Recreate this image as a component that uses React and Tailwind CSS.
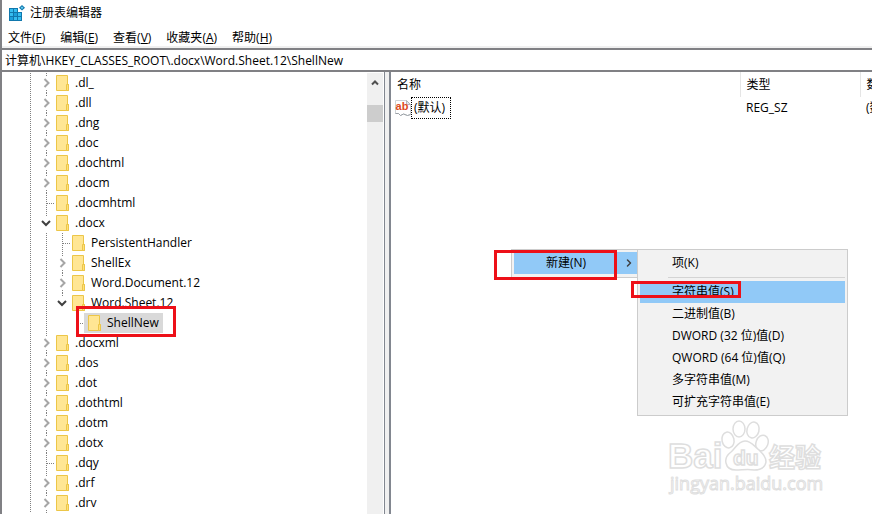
import { ChevronRight } from 'lucide-react'

const MENUS = [
  ['文件', 'F'],
  ['编辑', 'E'],
  ['查看', 'V'],
  ['收藏夹', 'A'],
  ['帮助', 'H'],
]

// state: closed | open | leaf
const KEYS = [
  { name: '.dl_', level: 0, state: 'closed' },
  { name: '.dll', level: 0, state: 'closed' },
  { name: '.dng', level: 0, state: 'closed' },
  { name: '.doc', level: 0, state: 'closed' },
  { name: '.dochtml', level: 0, state: 'closed' },
  { name: '.docm', level: 0, state: 'closed' },
  { name: '.docmhtml', level: 0, state: 'leaf' },
  { name: '.docx', level: 0, state: 'open' },
  { name: 'PersistentHandler', level: 1, state: 'leaf' },
  { name: 'ShellEx', level: 1, state: 'closed' },
  { name: 'Word.Document.12', level: 1, state: 'closed' },
  { name: 'Word.Sheet.12', level: 1, state: 'open' },
  { name: 'ShellNew', level: 2, state: 'leaf', last: true, selected: true },
  { name: '.docxml', level: 0, state: 'closed' },
  { name: '.dos', level: 0, state: 'closed' },
  { name: '.dot', level: 0, state: 'closed' },
  { name: '.dothtml', level: 0, state: 'closed' },
  { name: '.dotm', level: 0, state: 'closed' },
  { name: '.dotx', level: 0, state: 'closed' },
  { name: '.dqy', level: 0, state: 'leaf' },
  { name: '.drf', level: 0, state: 'closed' },
  { name: '.drv', level: 0, state: 'closed' },
]

const VALUES = [
  ['二进制值', 'B'],
  ['DWORD (32 位)值', 'D'],
  ['QWORD (64 位)值', 'Q'],
  ['多字符串值', 'M'],
  ['可扩充字符串值', 'E'],
]

const DOTS_V = 'bg-[repeating-linear-gradient(to_bottom,#808080_0_1px,transparent_1px_2px)]'
const DOTS_H = 'bg-[repeating-linear-gradient(to_right,#808080_0_1px,transparent_1px_2px)]'

const RegIcon = () => (
  <svg width="16" height="16" viewBox="0 0 16 16" aria-hidden="true">
    <path d="M0 3h9v4h4v9H0z" fill="#1178ad" />
    <path d="M1 4h3v3H1zM5 4h3v3H5zM1 8h3v3H1zM9 8h3v3H9zM5 12h3v3H5zM9 12h3v3H9z" fill="#35bdf0" />
    <path d="M5 8h3v3H5zM1 12h3v3H1z" fill="#1c9fdc" />
    <path d="M13 0l3 2.800-3 2.800-3-2.800z" fill="#1178ad" />
    <path d="M13 1.500l1.400 1.300L13 4.100l-1.400-1.300z" fill="#6fd3f7" />
  </svg>
)

const Folder = () => (
  <svg className="shrink-0" width="13" height="16" viewBox="0 0 13 16" aria-hidden="true">
    <path d="M.5.5h11v9h1v6H.5z" fill="#ffe694" stroke="#ecc648" />
    <path d="M10.500 15V9.500h2v6h-2z" fill="#ffe07a" stroke="#ecc648" />
  </svg>
)

const StringIcon = () => (
  <svg width="16" height="16" viewBox="0 0 16 16" aria-hidden="true">
    <path d="M.5.5h11l4 4v10l-3 1-4-1.500-3 1.500-2-2h-3z" fill="#fff" stroke="#cfd3d6" />
    <path d="M11.500.5v4h4z" fill="#e4e7ea" stroke="#b4b9be" />
    <path d="M.5 13.500h3l2 2 3-1.500 4 1.500 3-1" fill="none" stroke="#9aa0a6" />
    <text x="7" y="10" textAnchor="middle" fontFamily="Liberation Sans, sans-serif" fontSize="11" fontWeight="700" fill="#dd4a22">ab</text>
  </svg>
)

function Guide() {
  return (
    <span className="flex h-5 w-4 shrink-0 justify-center pl-px">
      <span className={`h-5 w-px ${DOTS_V}`} />
    </span>
  )
}

function Expander({ item }) {
  if (item.state === 'leaf') {
    return (
      <span className="flex h-5 w-4 shrink-0 items-center pl-2">
        {!item.last && <span className={`h-5 w-px ${DOTS_V}`} />}
        <span className={`h-px w-[7px] ${DOTS_H}`} />
      </span>
    )
  }
  const open = item.state === 'open'
  return (
    <button type="button" aria-label={item.name} className="flex h-5 w-4 shrink-0 flex-col items-center justify-between">
      <span className={`h-[3px] w-px ${DOTS_V}`} />
      {open ? (
        <svg width="10" height="7" viewBox="0 0 10 7">
          <path d="M1 1l4 4 4-4" fill="none" stroke="#404040" strokeWidth="2" />
        </svg>
      ) : (
        <svg width="7" height="10" viewBox="0 0 7 10">
          <path d="M1.500 1l4 4-4 4" fill="none" stroke="#a6a6a6" strokeWidth="2" />
        </svg>
      )}
      <span className={`h-[3px] w-px ${open ? '' : DOTS_V}`} />
    </button>
  )
}

function TreeRow({ item }) {
  return (
    <li role="treeitem" aria-selected={!!item.selected} className="relative flex h-5 items-center pl-5">
      <Guide />
      {item.level > 0 && <Guide />}
      {item.level > 1 && <span className="w-4 shrink-0" />}
      <Expander item={item} />
      <span className={`flex h-5 items-center gap-1.5 ${item.selected ? '-ml-0.5 bg-[#d9d9d9] pr-1 pl-1' : 'pl-0.5'}`}>
        <Folder />
        <span className="whitespace-nowrap">{item.name}</span>
      </span>
      {item.selected && <span className="absolute -top-[7px] left-[74px] h-[31px] w-[100px] border-3 border-[#ed1018]" />}
    </li>
  )
}

function MenuItem({ label, hot, active }) {
  return (
    <button type="button" role="menuitem" className={`flex h-[22px] w-full items-center pl-8 text-left ${active ? 'bg-[#91c9f7]' : ''}`}>
      {label}({hot})
    </button>
  )
}

function ContextMenu() {
  return (
    <div className="absolute top-[177px] left-[120px] flex items-start">
      <div role="menu" className="h-[29px] w-[126px] border border-r-0 border-[#ccc] bg-[#f2f2f2] py-0.5 pl-0.5">
        <button type="button" role="menuitem" className="flex h-[22px] w-full items-center justify-between bg-[#91c9f7] pr-0.5 pl-8">
          新建(N)
          <ChevronRight size={12} color="#404040" strokeWidth={3} />
        </button>
      </div>
      <div role="menu" className="w-[211px] border border-[#ccc] bg-[#f2f2f2] p-0.5">
        <MenuItem label="项" hot="K" />
        <div className="my-[3px] ml-7 h-px bg-[#d4d4d4]" />
        <MenuItem label="字符串值" hot="S" active />
        {VALUES.map(([label, hot]) => (
          <MenuItem key={hot} label={label} hot={hot} />
        ))}
      </div>
      <span className="absolute top-px -left-[17px] h-[30px] w-[123px] border-3 border-[#ed1018]" />
      <span className="absolute top-8 left-[120px] h-[17px] w-[110px] border-3 border-[#ed1018]" />
    </div>
  )
}

function Watermark() {
  return (
    <svg className="absolute top-[346px] left-[275px]" width="164" height="84" viewBox="0 0 164 84" fill="#fff" stroke="#dedede" strokeWidth="1.500">
      <text x="2" y="50" fontFamily="Liberation Sans, sans-serif" fontSize="35" fontWeight="700">Bai</text>
      <ellipse cx="62" cy="22" rx="6" ry="8" transform="rotate(-12 62 22)" />
      <ellipse cx="73" cy="11" rx="6" ry="8" />
      <ellipse cx="87" cy="12" rx="6" ry="8" transform="rotate(14 87 12)" />
      <ellipse cx="96" cy="25" rx="6" ry="8" transform="rotate(20 96 25)" />
      <path d="M79 23c-7 0-9 7-14 11-4 3-6 7-5 11 1 5 5 7 10 7 6 0 12-1 18 0 6 0 11-2 12-8 0-5-3-8-7-12-5-4-8-9-14-9z" />
      <text x="67" y="47" fontFamily="Liberation Sans, sans-serif" fontSize="21" fontWeight="700">du</text>
      <text x="103" y="49" fontFamily="Noto Sans CJK SC, sans-serif" fontSize="26" fontWeight="700">经验</text>
      <text x="4" y="72" fontFamily="Open Sans, sans-serif" fontSize="18" strokeWidth="1">jingyan.baidu.com</text>
    </svg>
  )
}

export default function App() {
  return (
    <div className="flex h-screen flex-col overflow-hidden border-l-2 border-[#808084] bg-white font-['Open_Sans','Noto_Sans_CJK_SC',sans-serif] text-[12px] leading-5 text-black">
      <header className="flex h-[26px] shrink-0 items-center gap-[5px] pl-[7px]">
        <RegIcon />
        <h1>注册表编辑器</h1>
      </header>
      <nav className="flex h-[22px] shrink-0 items-center gap-[15px] border-b-2 border-[#f0f0f0] pt-[3px] pl-1.5">
        {MENUS.map(([label, hot]) => (
          <button key={hot} type="button">
            {label}(<u>{hot}</u>)
          </button>
        ))}
      </nav>
      <input
        aria-label="地址"
        className="h-6 w-full shrink-0 border-y-2 border-[#808084] pl-[3px] outline-none"
        defaultValue="计算机\HKEY_CLASSES_ROOT\.docx\Word.Sheet.12\ShellNew"
      />
      <main className="flex min-h-0 flex-1">
        <section className="flex w-[383px] shrink-0 overflow-hidden border-r border-[#828790]">
          <ul role="tree" className="flex-1 pt-px">
            {KEYS.map(item => (
              <TreeRow key={item.name} item={item} />
            ))}
          </ul>
          <div className="mt-px mr-px flex w-4 flex-col bg-[#f0f0f0]">
            <button type="button" aria-label="向上" className="flex h-8 w-full justify-center pt-1.5">
              <svg width="8" height="7" viewBox="0 0 8 7">
                <path d="M1 5.500l3-3 3 3" fill="none" stroke="#505050" strokeWidth="2" />
              </svg>
            </button>
            <div className="h-[17px] w-full bg-[#cdcdcd]" />
          </div>
        </section>
        <div className="w-1 shrink-0 bg-[#f0f0f0]" />
        <section className="relative min-w-0 flex-1 overflow-hidden border-l-2 border-[#828790]">
          <table className="w-full table-fixed border-collapse whitespace-nowrap">
            <thead>
              <tr className="h-[25px] text-left">
                <th className="border-r border-[#e5e5e5] p-0 pl-1.5 font-normal">名称</th>
                <th className="w-[120px] border-r border-[#e5e5e5] p-0 pl-1.5 font-normal">类型</th>
                <th className="w-3 overflow-hidden p-0 pl-1.5 font-normal">数据</th>
              </tr>
            </thead>
            <tbody>
              <tr className="h-[22px]">
                <td className="p-0 pl-1">
                  <span className="flex items-center">
                    <StringIcon />
                    <span className="border border-dotted border-black pr-[5px] pl-0.5">(默认)</span>
                  </span>
                </td>
                <td className="p-0 pl-1.5">REG_SZ</td>
                <td className="overflow-hidden p-0 pl-1.5">(数值未设置)</td>
              </tr>
            </tbody>
          </table>
          <ContextMenu />
          <Watermark />
        </section>
      </main>
    </div>
  )
}
